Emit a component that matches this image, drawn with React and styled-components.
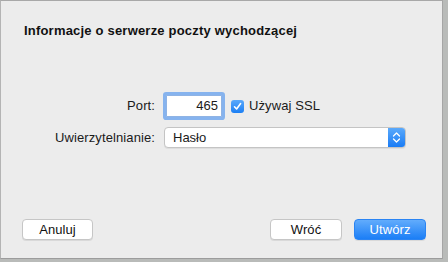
import React from 'react';
import styled, { createGlobalStyle } from 'styled-components';

const GlobalStyle = createGlobalStyle`
  html, body {
    margin: 0;
    padding: 0;
    background: #b9bbb9;
    font-family: "Liberation Sans", Arial, sans-serif;
    -webkit-font-smoothing: antialiased;
  }
`;

const Sheet = styled.div`
  box-sizing: border-box;
  width: 443px;
  height: 259px;
  background: #ececec;
  border-top: 1px solid #a8a8a8;
  border-left: 1px solid #b4b4b4;
  border-right: 1px solid #a6a6a6;
  border-bottom: 1px solid #9c9c9c;
  display: flex;
  flex-direction: column;
  color: #1a1a1a;
`;

const Title = styled.h1`
  margin: 0;
  padding: 22px 0 0 23px;
  font-size: 13px;
  line-height: 16px;
  font-weight: bold;
  letter-spacing: 0.2px;
  color: #111;
`;

const Form = styled.div`
  display: grid;
  grid-template-columns: 154px auto;
  column-gap: 9px;
  row-gap: 10px;
  align-items: center;
  margin-top: 56px;
`;

const Label = styled.label`
  text-align: right;
  font-size: 13px;
  line-height: 16px;
  letter-spacing: 0.1px;
`;

const Inline = styled.div`
  display: flex;
  align-items: center;
`;

const NumberField = styled.div`
  box-sizing: border-box;
  width: 56px;
  height: 22px;
  margin-left: 2px;
  padding: 0 3px;
  background: #fff;
  border: 1px solid #8fb3e4;
  border-radius: 1px;
  box-shadow: 0 0 0 3px #86b3ee;
  font-size: 13px;
  line-height: 20px;
  text-align: right;
`;

const Check = styled.span`
  box-sizing: border-box;
  width: 13px;
  height: 13px;
  margin-left: 9px;
  border-radius: 3px;
  background: linear-gradient(#5aa9fb, #1c7ff4);
  display: flex;
  align-items: center;
  justify-content: center;
`;

const CheckText = styled.span`
  margin-left: 5px;
  font-size: 13px;
  line-height: 16px;
  letter-spacing: 0.1px;
`;

const Select = styled.div`
  box-sizing: border-box;
  width: 242px;
  height: 21px;
  display: flex;
  background: #fff;
  border: 1px solid #c4c4c4;
  border-radius: 4px;
  box-shadow: 0 1px 0 rgba(0, 0, 0, 0.06);
  overflow: hidden;
`;

const SelectValue = styled.span`
  flex: 1;
  padding-left: 8px;
  font-size: 13px;
  line-height: 19px;
`;

const Stepper = styled.span`
  width: 17px;
  background: linear-gradient(#5aa9fb, #1a7cf5);
  display: flex;
  align-items: center;
  justify-content: center;
`;

const Footer = styled.div`
  margin-top: auto;
  display: flex;
  gap: 12px;
  padding: 0 16px 18px 21px;
`;

const Button = styled.button`
  box-sizing: border-box;
  width: ${p => (p.$narrow ? '71px' : '72px')};
  height: 21px;
  padding: 0;
  font-family: inherit;
  font-size: 13px;
  line-height: 19px;
  letter-spacing: 0.1px;
  border-radius: 4px;
  border: 1px solid ${p => (p.$primary ? '#2a84f3' : '#c6c6c6')};
  background: ${p => (p.$primary ? 'linear-gradient(#62acfc, #1b7ef6)' : '#fff')};
  color: ${p => (p.$primary ? '#fff' : '#111')};
  box-shadow: 0 1px 0 rgba(0, 0, 0, 0.08);
  margin-left: ${p => (p.$push ? 'auto' : '0')};
`;

const App = () => (
  <>
    <GlobalStyle />
    <Sheet>
      <Title>Informacje o serwerze poczty wychodzącej</Title>
      <Form>
        <Label>Port:</Label>
        <Inline>
          <NumberField>465</NumberField>
          <Check>
            <svg width="9" height="9" viewBox="0 0 9 9">
              <path d="M1.5 4.8 L3.6 7 L7.6 1.6" fill="none" stroke="#fff" strokeWidth="1.6" strokeLinecap="round" strokeLinejoin="round" />
            </svg>
          </Check>
          <CheckText>Używaj SSL</CheckText>
        </Inline>
        <Label>Uwierzytelnianie:</Label>
        <Select>
          <SelectValue>Hasło</SelectValue>
          <Stepper>
            <svg width="9" height="13" viewBox="0 0 9 13">
              <path d="M1.5 5 L4.5 2 L7.5 5 M1.5 8 L4.5 11 L7.5 8" fill="none" stroke="#fff" strokeWidth="1.3" strokeLinecap="round" strokeLinejoin="round" />
            </svg>
          </Stepper>
        </Select>
      </Form>
      <Footer>
        <Button $narrow>Anuluj</Button>
        <Button $push>Wróć</Button>
        <Button $primary>Utwórz</Button>
      </Footer>
    </Sheet>
  </>
);

export default App;
